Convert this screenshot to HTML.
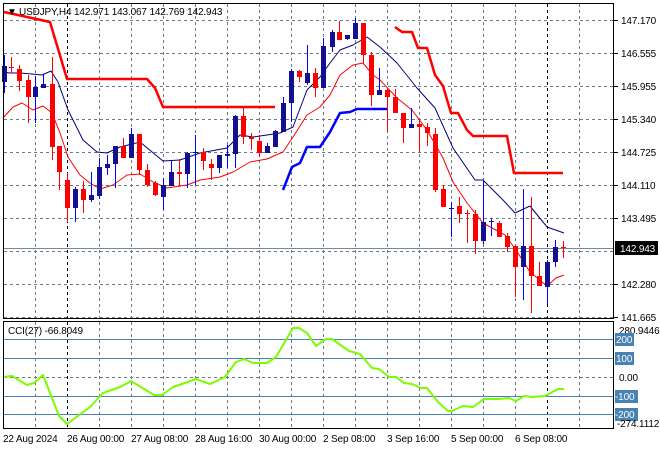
<!DOCTYPE html>
<html><head><meta charset="utf-8"><style>
html,body{margin:0;padding:0;background:#fff;width:660px;height:450px;overflow:hidden}
svg{display:block}
text{font-family:"Liberation Sans",sans-serif;font-size:10px;letter-spacing:-0.15px;fill:#000}
</style></head><body>
<svg id="s" width="660" height="450" xmlns="http://www.w3.org/2000/svg">
<rect width="660" height="450" fill="#fff"/>
<g id="grid"></g>
<g stroke="#4682b4" stroke-width="1">
<line x1="3" y1="339.5" x2="614" y2="339.5"/>
<line x1="3" y1="358.5" x2="614" y2="358.5"/>
<line x1="3" y1="396.5" x2="614" y2="396.5"/>
<line x1="3" y1="414.5" x2="614" y2="414.5"/>
</g>
<line x1="3" y1="248.5" x2="614" y2="248.5" stroke="#778899" stroke-width="1"/>
<g id="ind"></g>
<g id="candles"></g>
<rect x="3.5" y="3.5" width="610" height="315" fill="none" stroke="#000"/>
<rect x="3.5" y="321.5" width="610" height="107" fill="none" stroke="#000"/>
<g stroke="#000"><line x1="614" y1="20.5" x2="618" y2="20.5"/><line x1="614" y1="53.5" x2="618" y2="53.5"/><line x1="614" y1="86.5" x2="618" y2="86.5"/><line x1="614" y1="119.5" x2="618" y2="119.5"/><line x1="614" y1="152.5" x2="618" y2="152.5"/><line x1="614" y1="185.5" x2="618" y2="185.5"/><line x1="614" y1="218.5" x2="618" y2="218.5"/><line x1="614" y1="284.5" x2="618" y2="284.5"/><line x1="614" y1="317.5" x2="618" y2="317.5"/></g>
<text x="7" y="15" font-size="10">▼</text>
<text x="19" y="15">USDJPY,H4  142.971 143.067 142.769 142.943</text>
<g>
<text x="621" y="24">147.170</text>
<text x="621" y="57">146.555</text>
<text x="621" y="90">145.955</text>
<text x="621" y="123">145.340</text>
<text x="621" y="156">144.725</text>
<text x="621" y="189">144.110</text>
<text x="621" y="222">143.495</text>
<text x="621" y="288">142.280</text>
<text x="621" y="321">141.665</text>
</g>
<rect x="615" y="241" width="43" height="14" fill="#000"/>
<text x="620" y="252" style="fill:#fff">142.943</text>
<text x="8" y="334">CCI(27) -66.8049</text>
<text x="619" y="334">280.9446</text>
<rect x="615" y="333" width="19" height="13" fill="#4682b4"/><text x="616" y="343" style="fill:#fff">200</text>
<rect x="615" y="352" width="19" height="13" fill="#4682b4"/><text x="616" y="362" style="fill:#fff">100</text>
<text x="619" y="381">0.00</text>
<rect x="615" y="390" width="23" height="13" fill="#4682b4"/><text x="615" y="400" style="fill:#fff">-100</text>
<rect x="615" y="408" width="23" height="13" fill="#4682b4"/><text x="615" y="418" style="fill:#fff">-200</text>
<text x="617" y="427">-274.1112</text>
<g>
<text x="3" y="442">22 Aug 2024</text>
<text x="67" y="442">26 Aug 00:00</text>
<text x="131" y="442">27 Aug 08:00</text>
<text x="195" y="442">28 Aug 16:00</text>
<text x="259" y="442">30 Aug 00:00</text>
<text x="323" y="442">2 Sep 08:00</text>
<text x="387" y="442">3 Sep 16:00</text>
<text x="451" y="442">5 Sep 00:00</text>
<text x="515" y="442">6 Sep 08:00</text>
</g>
</svg>
<script>
var NS="http://www.w3.org/2000/svg";
function el(p,t,a){var e=document.createElementNS(NS,t);for(var k in a)e.setAttribute(k,a[k]);document.getElementById(p).appendChild(e);return e;}
for(var x=35;x<611;x+=32){var blk=(x==67||x==307||x==547);
 el("grid","line",{x1:x+.5,y1:4,x2:x+.5,y2:318,stroke:blk?"#000":"#6a7a8a","stroke-dasharray":"3,3"});
 el("grid","line",{x1:x+.5,y1:322,x2:x+.5,y2:428,stroke:blk?"#000":"#6a7a8a","stroke-dasharray":"3,3"});}
[20,53,86,119,152,185,218,251,284,317].forEach(function(y){el("grid","line",{x1:4,y1:y+.5,x2:613,y2:y+.5,stroke:"#6a7a8a","stroke-dasharray":"3,3"});});
el("grid","line",{x1:4,y1:377.5,x2:613,y2:377.5,stroke:"#6a7a8a","stroke-dasharray":"3,3"});
function pl(pts,col,w){el("ind","polyline",{points:pts,fill:"none",stroke:col,"stroke-width":w,"stroke-linejoin":"round"});}
pl("3,377 12,376 27,385 34,383 43,375 59,416 67,424 90,407 103,393 120,387 131,381 154,395 162,395 173,387 185,383 196,379 210,384 225,377 236,362 244,359 253,363 267,363 276,357 293,328 299,328 307,333 316,346 326,339 332,339 349,351 360,354 372,368 379,369 389,377 396,377 404,383 412,384 421,388 427,388 438,402 448,411 452,411 463,406 473,407 484,399 499,399 509,398 516,401 524,396 532,397 545,396 558,389 564,389","#7cfc00",2);
pl("4,12 50,22 67,79 147,79 155,88 163,107 275,107","#ff0000",2.5);
pl("395,27 402,32 412,32 418,48 427,48 435,75 443,86 451,113 458,113 467,130 473,136 507,136 514,173 563,173","#ff0000",2.5);
pl("283,190 292,167 300,163 307,147 320,147 330,132 340,113 350,112 357,109 387,109","#0000ff",2.5);
pl("3,72 10,73 20,73 32,74 42,75 51,71 58,82 68,110 83,140 97,152 107,153 120,147 140,142 163,161 180,160 200,153 227,148 240,135 253,137 267,135 280,133 293,127 307,90 320,77 330,63 340,50 353,45 367,37 380,47 397,63 417,88 435,108 453,148 475,180 483,180 503,200 515,213 530,206 543,222 547,227 564,233","#000080",1);
pl("3,118 13,107 22,103 33,110 43,106 52,113 60,133 68,157 80,175 90,183 100,189 113,185 127,175 140,174 153,182 167,188 187,185 200,180 220,177 233,172 250,162 267,159 283,152 293,137 307,115 320,107 330,95 340,75 353,65 363,63 373,75 380,80 397,98 412,110 427,130 443,158 453,182 467,203 483,223 505,235 516,250 530,272 547,286 556,278 564,275","#ff0000",1);
var C=[[4,66,82,55,93,"b"],[11,67,68,57,73,"r"],[19,69,81,65,91,"r"],[28,80,97,75,123,"r"],[35,87,97,76,123,"b"],[43,84,88,74,88,"b"],[52,84,147,57,160,"r"],[59,146,172,146,190,"r"],[67,180,208,173,222,"r"],[75,189,208,187,222,"b"],[83,189,200,181,213,"r"],[91,195,200,172,202,"b"],[99,167,196,158,199,"b"],[107,164,168,155,175,"b"],[115,146,164,146,188,"b"],[123,146,158,138,158,"r"],[131,134,158,128,158,"b"],[139,134,170,134,175,"r"],[147,170,185,164,187,"r"],[155,183,195,181,196,"r"],[163,185,197,178,210,"b"],[171,172,186,161,186,"b"],[179,172,174,159,186,"r"],[187,153,174,152,188,"b"],[195,152,153,135,185,"b"],[203,152,161,148,170,"r"],[211,164,168,159,180,"r"],[219,155,168,155,173,"b"],[227,154,156,145,168,"b"],[235,116,154,115,168,"b"],[243,116,137,107,144,"r"],[251,137,139,133,150,"r"],[259,141,153,135,157,"r"],[267,146,153,143,153,"b"],[275,131,147,130,147,"b"],[283,103,132,97,132,"b"],[291,71,103,69,122,"b"],[299,71,77,70,82,"r"],[307,73,83,45,85,"b"],[315,73,88,68,97,"r"],[323,46,88,38,88,"b"],[332,32,47,30,52,"b"],[339,32,40,21,40,"r"],[347,35,39,35,40,"b"],[355,23,39,18,39,"b"],[363,23,55,23,63,"r"],[371,55,95,52,106,"r"],[379,90,95,68,95,"b"],[387,90,97,88,132,"r"],[395,97,113,89,113,"r"],[403,113,128,113,143,"r"],[411,124,128,108,128,"b"],[419,124,127,121,152,"r"],[427,127,133,123,146,"r"],[435,134,190,128,192,"r"],[443,189,207,185,207,"r"],[451,208,209,202,237,"b"],[459,206,214,197,223,"r"],[467,213,214,210,243,"r"],[475,214,241,210,254,"r"],[483,222,241,180,244,"b"],[491,221,222,218,236,"b"],[499,223,237,221,237,"r"],[507,236,247,233,252,"r"],[515,246,267,246,297,"r"],[523,246,267,189,300,"b"],[531,246,276,197,313,"r"],[539,276,286,262,286,"r"],[547,262,287,260,304,"b"],[555,247,262,240,267,"b"],[563,247,248,241,258,"r"]];
C.forEach(function(c){var bc=c[5]=="b"?"#101090":"#ff0000",wc=c[5]=="b"?"#0000ff":"#ff0000";
 el("candles","line",{x1:c[0]+.5,y1:c[3],x2:c[0]+.5,y2:c[4],stroke:wc,"stroke-width":1});
 var h=Math.max(c[2]-c[1],1);
 el("candles","rect",{x:c[0]-2,y:c[1],width:5,height:h,fill:bc});});
</script>
</body></html>
